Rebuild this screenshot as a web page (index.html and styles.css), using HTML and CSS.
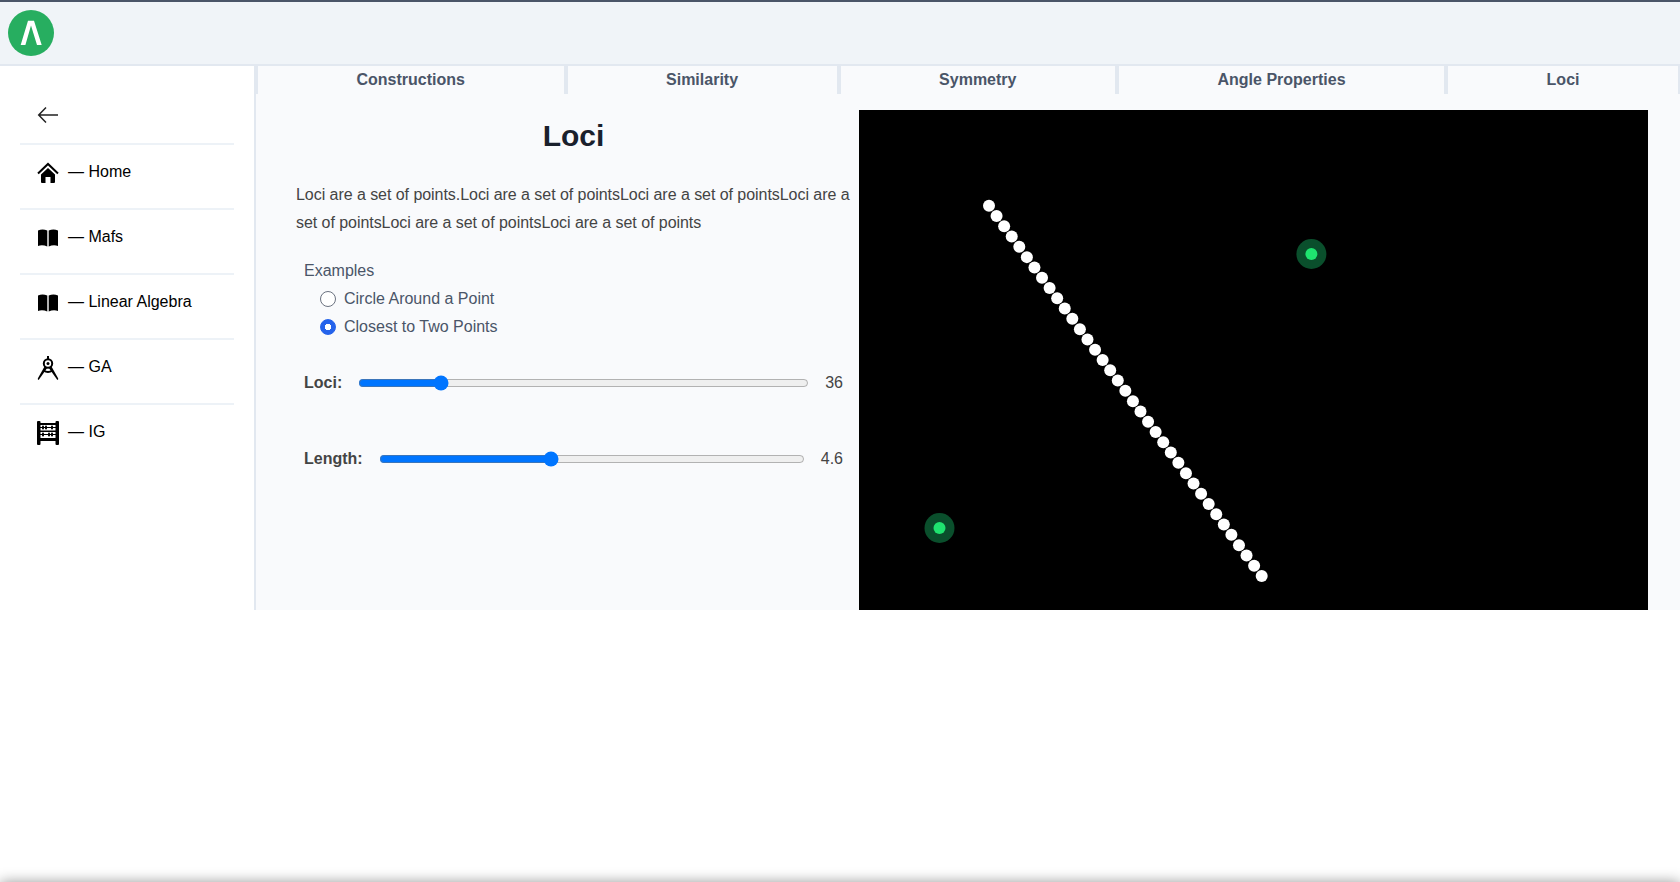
FILE: index.html
```html
<!DOCTYPE html>
<html lang="en">
<head>
  <meta charset="UTF-8">
  <meta name="viewport" content="width=device-width, initial-scale=1.0">
  <title>Loci</title>
  <link rel="stylesheet" href="styles.css">
</head>
<body>
  <header class="topbar">
    <svg class="logo" viewBox="0 0 46 46">
      <circle cx="23" cy="23" r="23" fill="#27ae60"/>
      <polygon points="20,10.700 26,10.700 33.700,35 29,35 23,15.500 17.400,35 12.700,35" fill="#fff"/>
    </svg>
  </header>

  <div class="app">
    <nav class="sidebar">
      <div class="back">
        <svg class="icon" viewBox="0 0 24 24" fill="none" stroke="#222" stroke-width="1.5">
          <path d="M22 12H3M10 4.500L2.700 12l7.300 7.500"/>
        </svg>
      </div>
      <ul class="nav-list">
        <li class="nav-item">
          <svg class="icon" viewBox="0 0 24 24">
            <path d="M2 12.500L12 3l10 9.500" fill="none" stroke="#000" stroke-width="2"/>
            <path d="M5 13.500l7-6.500 7 6.500V21q0 1-1 1h-3.500v-6h-5v6H6q-1 0-1-1z"/>
          </svg>
          <span>— Home</span>
        </li>
        <li class="nav-item">
          <svg class="icon" viewBox="0 0 24 24">
            <path d="M2 4.500Q6.500 2.500 11.300 4.500V20.500Q6.500 18.500 2 20z"/>
            <path d="M22 4.500Q17.500 2.500 12.700 4.500V20.500Q17.500 18.500 22 20z"/>
          </svg>
          <span>— Mafs</span>
        </li>
        <li class="nav-item">
          <svg class="icon" viewBox="0 0 24 24">
            <path d="M2 4.500Q6.500 2.500 11.300 4.500V20.500Q6.500 18.500 2 20z"/>
            <path d="M22 4.500Q17.500 2.500 12.700 4.500V20.500Q17.500 18.500 22 20z"/>
          </svg>
          <span>— Linear Algebra</span>
        </li>
        <li class="nav-item">
          <svg class="icon" viewBox="0 0 24 24">
            <rect x="11" y="0" width="2" height="4"/>
            <circle cx="12" cy="7.500" r="4.200" fill="none" stroke="#000" stroke-width="2"/>
            <circle cx="12" cy="7.500" r="1.500"/>
            <path d="M8.500 10.500L11 12.200 3 23.500 2 24 1.800 22.500z"/>
            <path d="M15.500 10.500L13 12.200 21 23.500 22 24 22.200 22.500z"/>
            <path d="M7.500 14.500Q12 17.500 16.500 14.500" fill="none" stroke="#000" stroke-width="2"/>
          </svg>
          <span>— GA</span>
        </li>
        <li class="nav-item">
          <svg class="icon" viewBox="0 0 24 24">
            <rect x="1" y="0" width="3.500" height="24" rx="1"/>
            <rect x="19.500" y="0" width="3.500" height="24" rx="1"/>
            <rect x="4" y="2" width="16" height="2"/>
            <rect x="4" y="9.500" width="16" height="1.500"/>
            <rect x="4" y="17" width="16" height="3"/>
            <rect x="4" y="6" width="16" height="1"/>
            <rect x="4" y="13" width="16" height="1"/>
            <rect x="6" y="4.500" width="2" height="4" rx="1"/>
            <rect x="9" y="4.500" width="2" height="4" rx="1"/>
            <rect x="15" y="4.500" width="2" height="4" rx="1"/>
            <rect x="6" y="11.500" width="2" height="4" rx="1"/>
            <rect x="12" y="11.500" width="2" height="4" rx="1"/>
            <rect x="15" y="11.500" width="2" height="4" rx="1"/>
          </svg>
          <span>— IG</span>
        </li>
      </ul>
    </nav>

    <main class="content">
      <div class="tabs">
        <a class="tab">Constructions</a>
        <a class="tab">Similarity</a>
        <a class="tab">Symmetry</a>
        <a class="tab">Angle Properties</a>
        <a class="tab">Loci</a>
      </div>

      <div class="lesson-body">
        <section class="lesson">
          <h1 class="lesson-title">Loci</h1>
          <p class="lesson-text">Loci are a set of points.Loci are a set of pointsLoci are a set of pointsLoci are a set of pointsLoci are a set of pointsLoci are a set of points</p>

          <div class="examples">
            <div class="examples-title">Examples</div>
            <label class="radio-row">
              <input type="radio" name="example">
              <span>Circle Around a Point</span>
            </label>
            <label class="radio-row">
              <input type="radio" name="example" checked>
              <span>Closest to Two Points</span>
            </label>
          </div>

          <div class="slider-row slider-first">
            <label class="slider-label" for="lociCount">Loci:</label>
            <input class="slider" type="range" id="lociCount" min="0" max="210" value="36">
            <span class="slider-value">36</span>
          </div>
          <div class="slider-row slider-second">
            <label class="slider-label" for="lineLength">Length:</label>
            <input class="slider" type="range" id="lineLength" min="1" max="10" step="0.1" value="4.6">
            <span class="slider-value">4.6</span>
          </div>
        </section>

        <svg class="canvas" id="canvas" viewBox="0 0 789 500">
          <circle cx="452.400" cy="144" r="15" fill="#0a4f2c"/>
          <circle cx="452.400" cy="144" r="6" fill="#1fe36f"/>
          <circle cx="80.500" cy="418" r="15" fill="#0a4f2c"/>
          <circle cx="80.500" cy="418" r="6" fill="#1fe36f"/>
        </svg>
      </div>
    </main>
  </div>

  <div class="page-end"></div>

  <script src="script.js"></script>
</body>
</html>
```

FILE: styles.css
```css
* {
  box-sizing: border-box;
}

html,
body {
  height: 100%;
}

body {
  margin: 0;
  display: flex;
  flex-direction: column;
  overflow: hidden;
  background-color: white;
  font-family: "Liberation Sans", Arial, sans-serif;
  font-size: 16px;
  line-height: 24px;
}

.topbar {
  height: 66px;
  flex: none;
  padding: 8px;
  background-color: #f0f4f8;
  border-top: 2px solid #4a5568;
  border-bottom: 2px solid #e2e8f0;
}

.logo {
  display: block;
  width: 46px;
  height: 46px;
}

.app {
  display: flex;
  flex: none;
  height: 544px;
}

.sidebar {
  width: 254px;
  flex: none;
  padding: 37px 20px 0;
  background: white;
}

.icon {
  display: block;
  width: 24px;
  height: 24px;
  flex: none;
  overflow: visible;
}

.back {
  height: 40px;
  padding-left: 16px;
}

.nav-list {
  margin: 0;
  padding: 0;
  list-style: none;
}

.nav-item {
  display: flex;
  align-items: flex-start;
  gap: 8px;
  height: 65px;
  padding: 15px 16px 0;
  border-top: 2px solid #edf2f7;
  color: #000;
}

.nav-item .icon {
  margin-top: 1px;
}

.content {
  flex: 1;
  min-width: 0;
  background-color: #f9fafc;
  border-left: 2px solid #e2e8f0;
}

.tabs {
  display: flex;
  height: 28px;
}

.tab {
  flex: 1 1 auto;
  display: flex;
  align-items: center;
  justify-content: center;
  border-left: 4px solid #e2e8f0;
  color: #4a5568;
  font-weight: bold;
}

.tab:first-child {
  border-left-width: 2px;
}

.tab:last-child {
  border-right: 2px solid #e2e8f0;
}

.lesson-body {
  display: flex;
  padding-top: 16px;
}

.lesson {
  flex: 1;
  min-width: 0;
  padding: 8px 0 0 32px;
  color: #444;
}

.lesson-title {
  margin: 0;
  color: #1a202c;
  font-size: 30px;
  line-height: 36px;
  text-align: center;
}

.lesson-text {
  margin: 27px 0 0;
  padding-left: 8px;
  line-height: 28px;
  letter-spacing: -0.05px;
}

.examples {
  margin-top: 20px;
  padding-left: 16px;
  color: #4a5568;
  line-height: 28px;
}

.radio-row {
  display: flex;
  align-items: center;
  gap: 8px;
  padding-left: 16px;
}

.radio-row input {
  appearance: none;
  width: 16px;
  height: 16px;
  margin: 0;
  border: 1px solid #6b7280;
  border-radius: 50%;
  background: white;
}

.radio-row input:checked {
  border-color: #2563eb;
  background: radial-gradient(circle, white 3px, #2563eb 3.5px);
}

.slider-row {
  display: flex;
  align-items: center;
  gap: 16px;
  height: 24px;
  padding: 0 16px;
}

.slider-first {
  margin-top: 30px;
}

.slider-second {
  margin-top: 52px;
}

.slider-label {
  font-weight: bold;
}

.slider {
  flex: 1;
  min-width: 0;
  margin: 0;
}

.canvas {
  display: block;
  width: 789px;
  height: 500px;
  flex: none;
  margin-right: 32px;
  background-color: black;
}

/* bar just under the fold, only its shadow shows */
.page-end {
  flex: none;
  height: 20px;
  margin-top: auto;
  margin-bottom: -20px;
  box-shadow: 0 0 14px rgba(0, 0, 0, 0.4);
}
```

FILE: script.js
```js
// Titik-titik lokus di antara dua ujung garis
const canvas = document.getElementById("canvas");
const jumlah = 36;
const awal = { x: 130, y: 95.7 };
const akhir = { x: 402.7, y: 466 };

for (let i = 0; i <= jumlah; i++) {
  const t = i / jumlah;
  const titik = document.createElementNS("http://www.w3.org/2000/svg", "circle");
  titik.setAttribute("cx", awal.x + (akhir.x - awal.x) * t);
  titik.setAttribute("cy", awal.y + (akhir.y - awal.y) * t);
  titik.setAttribute("r", 6);
  titik.setAttribute("fill", "white");
  canvas.appendChild(titik);
}
```
